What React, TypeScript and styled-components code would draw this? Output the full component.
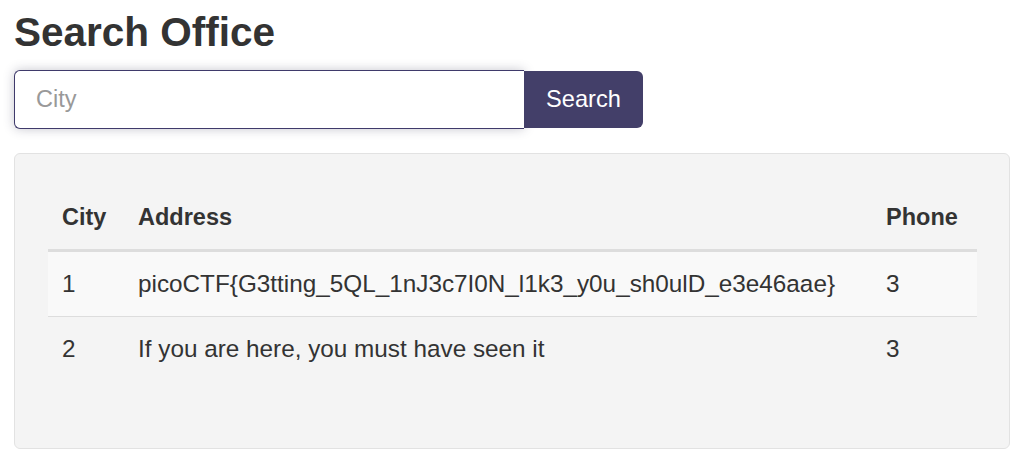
import React from "react";
import styled, { createGlobalStyle } from "styled-components";

const GlobalStyle = createGlobalStyle`
  html, body { margin: 0; padding: 0; background: #ffffff; }
  body { font-family: "Liberation Sans", Arial, Helvetica, sans-serif; color: #333333; }
  * { box-sizing: border-box; }
`;

const Page = styled.div`
  width: 1030px;
  padding: 10px 20px 0 14px;
  display: flex;
  flex-direction: column;
`;

const Title = styled.h2`
  margin: 0;
  font-size: 40.5px;
  line-height: 44px;
  font-weight: 700;
  color: #333333;
`;

const SearchForm = styled.form`
  display: flex;
  margin-top: 16px;
  width: 629px;
  height: 59px;
`;

const CityInput = styled.input`
  flex: 0 0 510px;
  height: 59px;
  border: 1px solid #3f3a6b;
  border-right: none;
  border-radius: 6px 0 0 6px;
  padding: 0 21px;
  font-family: inherit;
  font-size: 23.5px;
  color: #333;
  background: #fff;
  box-shadow: 0 0 11px rgba(50, 50, 80, 0.28);
  outline: none;
  &::placeholder { color: #999999; }
`;

const SearchButton = styled.button`
  flex: 0 0 119px;
  height: 57px;
  margin-top: 1px;
  border: none;
  border-radius: 0 6px 6px 0;
  background: #433f69;
  color: #ffffff;
  font-family: inherit;
  font-size: 23.6px;
  padding: 0;
`;

const Well = styled.div`
  margin-top: 24px;
  width: 996px;
  background: #f4f4f4;
  border: 1px solid #e2e2e2;
  border-radius: 6px;
  padding: 32px 32px 33px 33px;
`;

const Table = styled.table`
  width: 929px;
  border-collapse: collapse;
  margin-bottom: 34px;
  table-layout: fixed;
`;

const Th = styled.th<{ $w?: number }>`
  width: ${(p) => (p.$w ? `${p.$w}px` : "auto")};
  text-align: left;
  font-size: 23.5px;
  font-weight: 700;
  line-height: 33px;
  padding: 15px 14px;
  border-bottom: 3px solid #dddddd;
  color: #333;
`;

const Body = styled.tbody`
  tr + tr > td { border-top: 1px solid #dddddd; }
`;

const Row = styled.tr<{ $striped?: boolean }>`
  background: ${(p) => (p.$striped ? "#f9f9f9" : "transparent")};
`;

const Td = styled.td`
  font-size: 24.3px;
  line-height: 34px;
  padding: 15px 14px;
  color: #333;
  white-space: nowrap;
`;

const rows = [
  { city: "1", address: "picoCTF{G3tting_5QL_1nJ3c7I0N_l1k3_y0u_sh0ulD_e3e46aae}", phone: "3" },
  { city: "2", address: "If you are here, you must have seen it", phone: "3" },
];

export default function App() {
  return (
    <>
      <GlobalStyle />
      <Page>
        <Title>Search Office</Title>
        <SearchForm onSubmit={(e) => e.preventDefault()}>
          <CityInput placeholder="City" />
          <SearchButton type="submit">Search</SearchButton>
        </SearchForm>
        <Well>
          <Table>
            <thead>
              <tr>
                <Th $w={76}>City</Th>
                <Th>Address</Th>
                <Th $w={105}>Phone</Th>
              </tr>
            </thead>
            <Body>
              {rows.map((r, i) => (
                <Row key={i} $striped={i % 2 === 0}>
                  <Td>{r.city}</Td>
                  <Td>{r.address}</Td>
                  <Td>{r.phone}</Td>
                </Row>
              ))}
            </Body>
          </Table>
        </Well>
      </Page>
    </>
  );
}
